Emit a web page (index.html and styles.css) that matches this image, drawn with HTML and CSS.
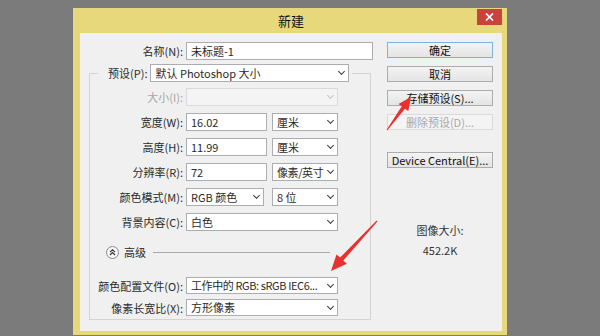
FILE: index.html
```html
<!DOCTYPE html>
<html>
<head>
    <meta charset="UTF-8">
    <title>新建</title>
    <link rel="stylesheet" href="styles.css">
</head>
<body>
    <div class="dialog">
        <div class="titlebar">
            <span class="title">新建</span>
            <span class="close">
                <svg width="9" height="8" viewBox="0 0 9 8"><path d="M1 0.5 L8 7.5 M8 0.5 L1 7.5" stroke="#fff" stroke-width="1.7"/></svg>
            </span>
        </div>

        <div class="content">
            <div class="main">
                <div class="name-row">
                    <label class="lbl-wide">名称(N):</label>
                    <div class="field w-name">未标题-1</div>
                </div>

                <fieldset class="group">
                    <legend class="preset">
                        <span>预设(P):</span>
                        <div class="select w-preset"><span>默认 Photoshop 大小</span></div>
                    </legend>

                    <div class="row">
                        <label class="lbl disabled">大小(I):</label>
                        <div class="select off w-full"><span></span></div>
                    </div>
                    <div class="row">
                        <label class="lbl">宽度(W):</label>
                        <div class="field w-num">16.02</div>
                        <div class="select w-unit"><span>厘米</span></div>
                    </div>
                    <div class="row">
                        <label class="lbl">高度(H):</label>
                        <div class="field w-num">11.99</div>
                        <div class="select w-unit"><span>厘米</span></div>
                    </div>
                    <div class="row">
                        <label class="lbl">分辨率(R):</label>
                        <div class="field w-num">72</div>
                        <div class="select w-unit"><span class="tight">像素/英寸</span></div>
                    </div>
                    <div class="row">
                        <label class="lbl">颜色模式(M):</label>
                        <div class="select w-mode"><span>RGB 颜色</span></div>
                        <div class="select w-unit"><span>8 位</span></div>
                    </div>
                    <div class="row">
                        <label class="lbl">背景内容(C):</label>
                        <div class="select w-full"><span>白色</span></div>
                    </div>

                    <!-- advanced section toggle -->
                    <div class="adv">
                        <svg width="13" height="13" viewBox="0 0 13 13">
                            <circle cx="6.5" cy="6.5" r="6" fill="#f7f7f7" stroke="#8a8a8a"/>
                            <path d="M4 6.2 L6.5 3.8 L9 6.2 M4 9 L6.5 6.6 L9 9" fill="none" stroke="#333" stroke-width="1.1"/>
                        </svg>
                        <span>高级</span>
                        <div class="adv-line"></div>
                    </div>

                    <div class="row small first-small">
                        <label class="lbl">颜色配置文件(O):</label>
                        <div class="select w-full"><span class="tight">工作中的 RGB: sRGB IEC6...</span></div>
                    </div>
                    <div class="row small">
                        <label class="lbl">像素长宽比(X):</label>
                        <div class="select w-full"><span>方形像素</span></div>
                    </div>
                </fieldset>
            </div>

            <div class="side">
                <div class="btn default">确定</div>
                <div class="btn">取消</div>
                <div class="btn">存储预设(S)...</div>
                <div class="btn off">删除预设(D)...</div>
                <div class="btn device">Device Central(E)...</div>
                <div class="info">图像大小:</div>
                <div class="info size">452.2K</div>
            </div>
        </div>
    </div>

    <!-- red hint arrows drawn over the dialog -->
    <svg class="arrows" width="600" height="336" viewBox="0 0 600 336">
        <polygon points="387.4,130.3 405.0,108.7 408.3,111.0 411,97 398.5,104.0 401.8,106.3 386.6,129.7" fill="#e8302e"/>
        <polygon points="377.4,221.4 343.3,260.6 346.9,263.8 331,271 336.5,254.4 340.1,257.6 376.6,220.6" fill="#e8302e"/>
    </svg>
</body>
</html>
```

FILE: styles.css
```css
/* page */
body {
    margin: 0;
    height: 336px;
    overflow: hidden;
    background-color: #7b7b7b;
    font-family: "Noto Sans CJK SC", sans-serif;
    font-size: 11px;
    color: #2a2a2a;
}

/* dialog window */
.dialog {
    width: 434px;
    margin: 8px 0 0 73px;
    padding: 0 5px 4px 7px;
    box-sizing: border-box;
    background-color: #e8d87c;
}

.titlebar {
    height: 25px;
    display: grid;
    grid-template-columns: 1fr auto 1fr;
}

.title {
    grid-column: 2;
    align-self: center;
    font-size: 13px;
    line-height: 16px;
    color: #111;
}

.close {
    grid-column: 3;
    justify-self: end;
    width: 25px;
    height: 16px;
    margin-top: 1px;
    background-color: #c8433c;
    display: flex;
    align-items: center;
    justify-content: center;
}

.content {
    height: 298px;
    box-sizing: border-box;
    padding-top: 9px;
    background-color: #f0f0f0;
    display: flex;
}

.main {
    width: 293px;
}

.side {
    width: 106px;
    margin-left: 14px;
    display: flex;
    flex-direction: column;
}

/* form rows */
.name-row {
    display: flex;
    align-items: center;
    gap: 3px;
    height: 18px;
}

.lbl-wide {
    width: 103px;
    text-align: right;
}

.group {
    width: 282px;
    box-sizing: border-box;
    margin: 4px 0 0 9px;
    padding: 0 0 3px 0;
    border: 1px solid #d3d3d3;
    min-width: 0;
}

.preset {
    margin-left: 8px;
    padding: 0 3px 0 10px;
    display: flex;
    align-items: center;
    gap: 3px;
}

.row {
    display: flex;
    align-items: center;
    gap: 3px;
    height: 18px;
    margin-top: 7px;
}

.row:first-of-type {
    margin-top: 6px;
}

.row.small {
    height: 17px;
    margin-top: 5px;
}

.row.first-small {
    margin-top: 18px;
}

.lbl {
    width: 93px;
    text-align: right;
    white-space: nowrap;
}

.disabled {
    color: #a6a6a6;
}

/* inputs and drop downs */
.field,
.select {
    height: 100%;
    box-sizing: border-box;
    border: 1px solid #abadb3;
    background-color: #fff;
    padding: 0 3px 0 4px;
    display: flex;
    align-items: center;
    line-height: 15px;
    white-space: nowrap;
}

.select span {
    flex: 1;
    overflow: hidden;
}

.select span.tight {
    letter-spacing: -0.4px;
}

.select::after {
    content: "";
    flex: none;
    width: 4px;
    height: 4px;
    margin: -3px 1px 0 3px;
    border-right: 1.5px solid #3a3a3a;
    border-bottom: 1.5px solid #3a3a3a;
    transform: rotate(45deg);
}

.select.off {
    background-color: #f4f4f4;
    border-color: #dadada;
}

.select.off::after {
    border-color: #c4c4c4;
}

.name-row .field {
    height: 18px;
}

.w-name { width: 187px; }
.w-preset { width: 199px; height: 18px; }
.w-full { width: 152px; }
.w-num { width: 81px; }
.w-unit { width: 66px; margin-left: 2px; }
.w-mode { width: 78px; }
.w-mode + .w-unit { margin-left: 5px; }

/* advanced toggle */
.adv {
    display: flex;
    align-items: center;
    height: 14px;
    margin: 14px 40px 0 16px;
    gap: 5px;
}

.adv-line {
    flex: 1;
    height: 1px;
    margin-left: 2px;
    background-color: #a9a9a9;
}

/* buttons */
.btn {
    height: 16px;
    box-sizing: border-box;
    margin-bottom: 8px;
    border: 1px solid #acacac;
    background: linear-gradient(#f3f3f3, #e4e4e4);
    text-align: center;
    line-height: 14px;
    color: #111;
}

.btn.default {
    border-color: #7fb0e0;
}

.btn.off {
    border-color: #dadada;
    background: #f4f4f4;
    color: #a8a8a8;
}

.btn.device {
    margin-top: 14px;
}

.info {
    text-align: center;
    line-height: 14px;
    color: #333;
    margin-top: 47px;
}

.info.size {
    margin-top: 6px;
}

.arrows {
    position: absolute;
    left: 0;
    top: 0;
    pointer-events: none;
}
```
